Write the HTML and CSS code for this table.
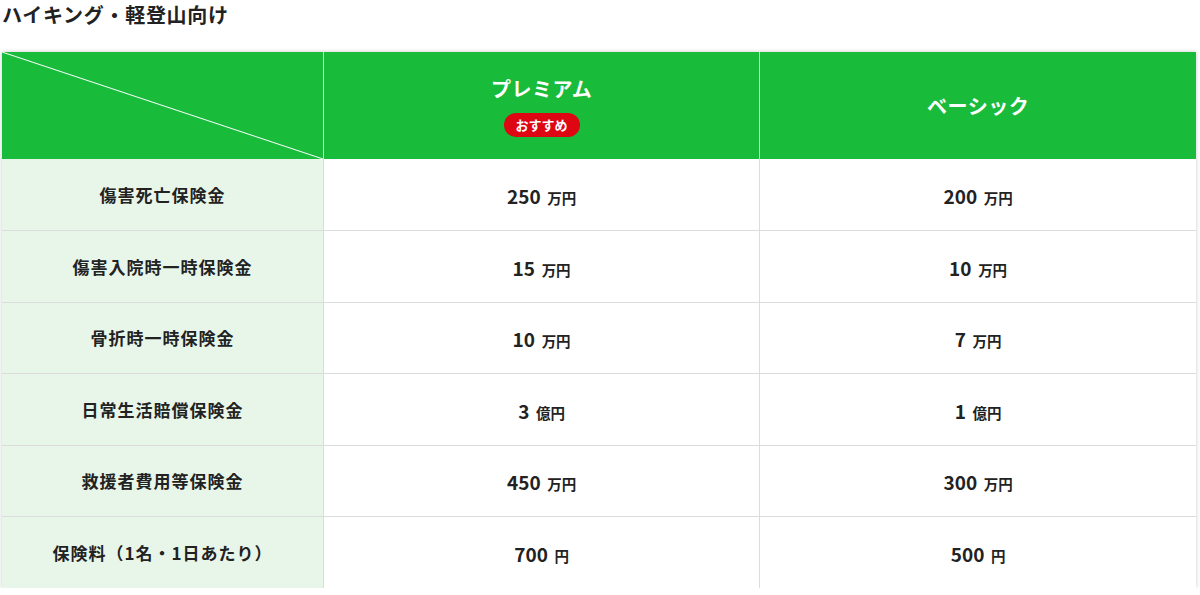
FILE: index.html
```html
<!DOCTYPE html>
<html lang="ja">
<head>
<meta charset="utf-8">
<link rel="stylesheet" href="styles.css">
</head>
<body>
<div class="page">
  <h2 class="title">ハイキング・軽登山向け</h2>
  <table class="plan">
    <thead>
      <tr>
        <th class="corner"></th>
        <th class="plan-name">
          <div class="name">プレミアム</div>
          <span class="badge">おすすめ</span>
        </th>
        <th class="plan-name">
          <div class="name">ベーシック</div>
        </th>
      </tr>
    </thead>
    <tbody>
      <tr><th>傷害死亡保険金</th><td><b>250</b> <small>万円</small></td><td><b>200</b> <small>万円</small></td></tr>
      <tr><th>傷害入院時一時保険金</th><td><b>15</b> <small>万円</small></td><td><b>10</b> <small>万円</small></td></tr>
      <tr><th>骨折時一時保険金</th><td><b>10</b> <small>万円</small></td><td><b>7</b> <small>万円</small></td></tr>
      <tr><th>日常生活賠償保険金</th><td><b>3</b> <small>億円</small></td><td><b>1</b> <small>億円</small></td></tr>
      <tr><th>救援者費用等保険金</th><td><b>450</b> <small>万円</small></td><td><b>300</b> <small>万円</small></td></tr>
      <tr><th>保険料（1名・1日あたり）</th><td><b>700</b> <small>円</small></td><td><b>500</b> <small>円</small></td></tr>
    </tbody>
  </table>
</div>
</body>
</html>
```
FILE: styles.css
```css
html, body {
  margin: 0;
  padding: 0;
  background: #fff;
}
body {
  font-family: "Noto Sans CJK JP", "Noto Sans", sans-serif;
  color: #222;
}
.page {
  padding: 0 4px 0 2px;
}
.title {
  margin: 0;
  padding-top: 1px;
  font-size: 20px;
  line-height: 28px;
  font-weight: 700;
  letter-spacing: 0.7px;
  color: #222;
}
.plan {
  margin-top: 23px;
  width: 100%;
  border-collapse: collapse;
  table-layout: fixed;
  box-shadow: 0 0 4px rgba(0, 0, 0, 0.22);
}
.plan th, .plan td {
  padding: 0;
  text-align: center;
  vertical-align: middle;
}
.plan thead th {
  background: #18bb3a;
  color: #fff;
  height: 107px;
  border-left: 1px solid #c9ecd0;
}
.plan thead th:first-child {
  border-left: none;
}
.plan .corner {
  width: 321px;
  background: linear-gradient(to top right, #18bb3a calc(50% - 1px), #f0fff3 50%, #18bb3a calc(50% + 1px));
}
.plan .plan-name .name {
  font-size: 20px;
  font-weight: 700;
  line-height: 28px;
  letter-spacing: 0.5px;
}
.badge {
  display: inline-block;
  margin-top: 10px;
  padding: 0 12px;
  height: 24px;
  line-height: 24px;
  border-radius: 12px;
  background: #dd0612;
  color: #fff;
  font-size: 13px;
  font-weight: 700;
}
.plan tbody tr {
  height: 71.5px;
  border-top: 1px solid #dcdcdc;
}
.plan tbody tr:first-child {
  border-top: none;
}
.plan tbody th {
  background: #e8f6ea;
  font-size: 17px;
  font-weight: 700;
  letter-spacing: 1px;
}
.plan tbody td {
  background: #fff;
  border-left: 1px solid #dcdcdc;
  padding-top: 2px;
}
.plan td b {
  font-size: 19px;
  font-weight: 700;
  margin-right: 3px;
}
.plan td small {
  font-size: 14.5px;
  font-weight: 700;
}
```
